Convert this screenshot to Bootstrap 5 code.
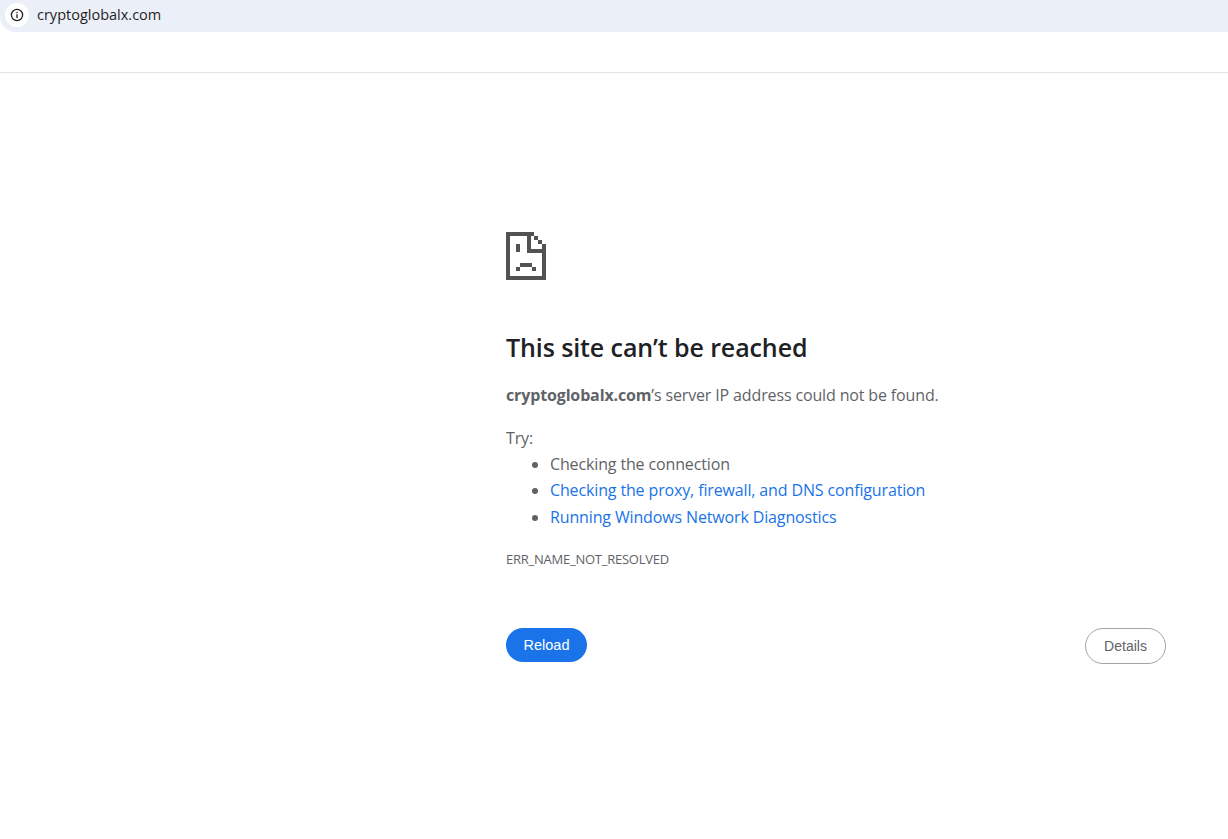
<!DOCTYPE html>
<html lang="en">
<head>
    <meta charset="UTF-8">
    <meta name="viewport" content="width=device-width, initial-scale=1.0">
    <title>cryptoglobalx.com</title>
    <link href="https://cdn.jsdelivr.net/npm/bootstrap@5.3.0/dist/css/bootstrap.min.css" rel="stylesheet">
    <style>
        body { background: #fff; font-family: "Open Sans", "Noto Sans", sans-serif; color: #5f6368; height: 839px; overflow: hidden; }
        .addr-bar { height: 32px; background: #ebf0f8; border-bottom-left-radius: 16px; padding: 0 0 2px 5px; }
        .addr-icon { width: 24px; height: 24px; background: #fff; border-radius: 50%; }
        .addr-text { font-size: 14.5px; line-height: 24px; color: #1f1f1f; margin-left: 8px; }
        .tool-strip { height: 41px; border-bottom: 1px solid #e3e3e3; }
        .err-wrap { width: 660px; margin-left: 506px; padding-top: 159px; }
        .sad-page { display: block; width: 40px; height: 48px; }
        .err-title { font-size: 25px; font-weight: 600; color: #202124; line-height: 32px; margin: 51px 0 0; letter-spacing: -.1px; }
        .err-summary { font-size: 16px; line-height: 26px; margin: 19px 0 0; letter-spacing: -.14px; }
        .err-summary strong { font-weight: 700; }
        .err-try { font-size: 16px; line-height: 26px; margin: 17px 0 0; letter-spacing: -.14px; }
        .err-list { font-size: 16px; line-height: 26.4px; margin: -.3px 0 0; padding-left: 44px; letter-spacing: -.14px; }
        .err-list a { color: #1a73e8; text-decoration: none; }
        .err-code { font-size: 13px; line-height: 16px; margin: 21px 0 0; letter-spacing: -.24px; }
        .err-actions { margin-top: 61px; }
        .btn-reload, .btn-details { font-family: "Liberation Sans", Arial, sans-serif; font-size: 14px; border-radius: 18px; width: 81px; padding: 1px 0 0; }
        .btn-reload { height: 34px; background: #1a73e8; border: 0; color: #fff; font-size: 14.5px; }
        .btn-details { height: 36px; background: #fff; border: 1px solid #a3a3a8; color: #5f6368; }
    </style>
</head>
<body>
    <!-- Address bar -->
    <div class="addr-bar d-flex align-items-center">
        <span class="addr-icon d-flex align-items-center justify-content-center">
            <svg width="14" height="14" viewBox="0 0 14 14" fill="none">
                <circle cx="7" cy="7" r="5.6" stroke="#1f1f1f" stroke-width="1.3"/>
                <rect x="6.35" y="6.2" width="1.3" height="3.9" fill="#1f1f1f"/>
                <rect x="6.35" y="3.9" width="1.3" height="1.3" fill="#1f1f1f"/>
            </svg>
        </span>
        <span class="addr-text">cryptoglobalx.com</span>
    </div>
    <div class="tool-strip"></div>

    <!-- Error page -->
    <main class="err-wrap">
        <svg class="sad-page" viewBox="0 0 40 48" shape-rendering="crispEdges" fill="#525252">
            <rect x="0" y="0" width="4" height="48"/>
            <rect x="0" y="0" width="25" height="4"/>
            <rect x="0" y="44" width="40" height="4"/>
            <rect x="36" y="12" width="4" height="36"/>
            <rect x="21" y="0" width="4" height="21"/>
            <rect x="21" y="17" width="19" height="4"/>
            <rect x="25" y="0" width="3" height="4"/>
            <rect x="28" y="4" width="4" height="4"/>
            <rect x="32" y="8" width="4" height="4"/>
            <rect x="10" y="12" width="4" height="8"/>
            <rect x="14" y="31" width="12" height="4"/>
            <rect x="10" y="35" width="4" height="4"/>
            <rect x="26" y="35" width="4" height="4"/>
        </svg>
        <h1 class="err-title">This site can’t be reached</h1>
        <p class="err-summary"><strong>cryptoglobalx.com</strong>’s server IP address could not be found.</p>
        <p class="err-try mb-0">Try:</p>
        <ul class="err-list">
            <li>Checking the connection</li>
            <li><a href="#">Checking the proxy, firewall, and DNS configuration</a></li>
            <li><a href="#">Running Windows Network Diagnostics</a></li>
        </ul>
        <p class="err-code">ERR_NAME_NOT_RESOLVED</p>
        <div class="err-actions d-flex justify-content-between align-items-start">
            <button type="button" class="btn btn-reload">Reload</button>
            <button type="button" class="btn btn-details">Details</button>
        </div>
    </main>

    <script src="https://cdn.jsdelivr.net/npm/bootstrap@5.3.0/dist/js/bootstrap.bundle.min.js"></script>
</body>
</html>
